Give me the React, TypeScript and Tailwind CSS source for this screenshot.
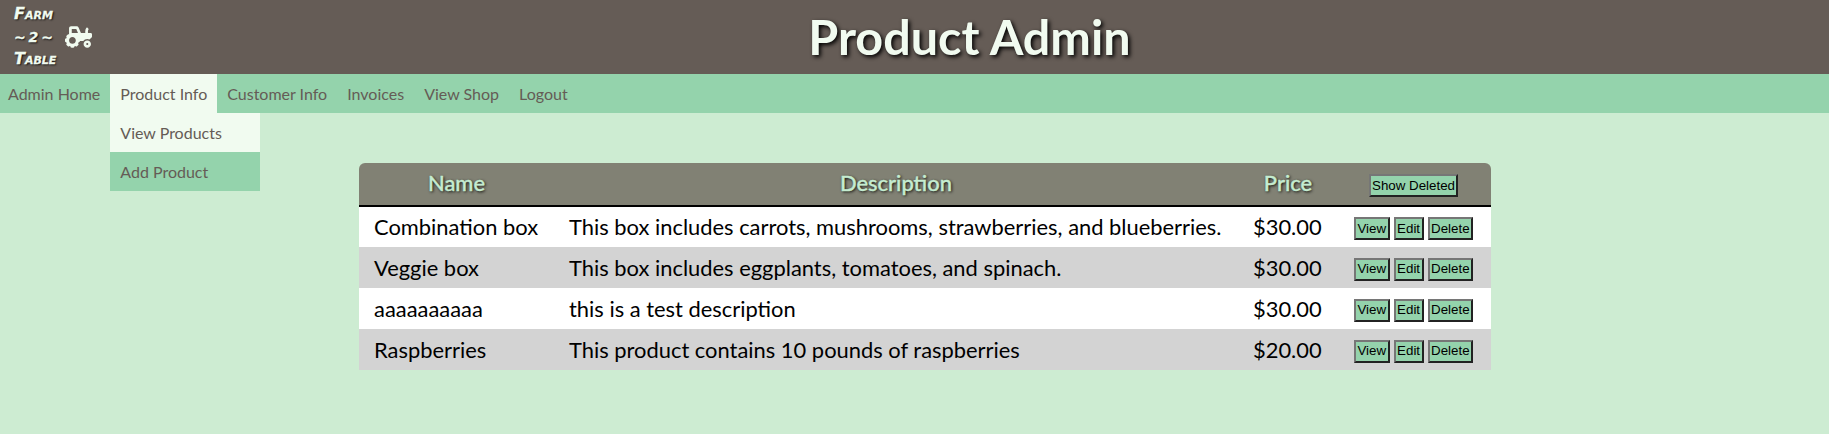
import { FaTractor } from "react-icons/fa";

const products = [
  { name: "Combination box", description: "This box includes carrots, mushrooms, strawberries, and blueberries.", price: "$30.00" },
  { name: "Veggie box", description: "This box includes eggplants, tomatoes, and spinach.", price: "$30.00" },
  { name: "aaaaaaaaaa", description: "this is a test description", price: "$30.00" },
  { name: "Raspberries", description: "This product contains 10 pounds of raspberries", price: "$20.00" },
];

const navItems = ["Admin Home", "Product Info", "Customer Info", "Invoices", "View Shop", "Logout"];

function TableButton({ label }: { label: string }) {
  return (
    <button
      type="button"
      className="h-[23px] border-2 border-t-[#767676] border-l-[#767676] border-r-[#222222] border-b-[#222222] bg-[#94d3ac] px-[1.5px] font-['Liberation_Sans',sans-serif] text-[13.33px] leading-none font-normal text-black"
    >
      {label}
    </button>
  );
}

export default function App() {
  return (
    <div className="min-h-screen bg-[#cdecd2] font-['Lato',sans-serif]">
      <header className="flex h-[74px] items-center bg-[#655c56]">
        <div className="flex w-[110px] items-center pl-[14px]">
          <div className="flex w-[44px] flex-col font-['DejaVu_Sans',sans-serif] text-[16px] leading-[22.5px] font-bold whitespace-nowrap text-[#f1fbf0] italic [font-variant:small-caps] [-webkit-text-stroke:0.3px] [text-shadow:1px_1px_2px_#000]">
            <span>Farm</span>
            <span className="text-[14px] [word-spacing:-2px]">~ 2 ~</span>
            <span>Table</span>
          </div>
          <FaTractor className="ml-[7px] h-[24px] w-[27px] text-[#f1fbf0]" />
        </div>
        <h1 className="flex-1 pb-[1px] text-center text-[48.5px] leading-none font-bold text-[#f1fbf0] [text-shadow:2px_2px_4px_#000]">
          Product Admin
        </h1>
      </header>

      <nav className="flex h-[39px] bg-[#94d3ac] text-base text-[#655c56]">
        {navItems.map((item) =>
          item === "Product Info" ? (
            <div key={item} className="relative">
              <a className="flex h-full items-center bg-[#f1fbf0] px-[10px]">{item}</a>
              <div className="absolute top-[39px] left-0 z-10 w-[150px]">
                <a className="flex h-[39px] items-center bg-[#f1fbf0] px-[10px]">View Products</a>
                <a className="flex h-[39px] items-center bg-[#94d3ac] px-[10px]">Add Product</a>
              </div>
            </div>
          ) : (
            <a key={item} className="flex items-center px-[10px] first:pl-2">
              {item}
            </a>
          ),
        )}
      </nav>

      <main className="pt-[50px] pl-[359px]">
        <table className="w-[1132px] table-fixed border-collapse text-[21.9px] text-black">
          <colgroup>
            <col className="w-[195px]" />
            <col className="w-[684px]" />
            <col className="w-[100px]" />
            <col className="w-[153px]" />
          </colgroup>
          <thead>
            <tr className="h-[43px] border-b-2 border-black text-[#c5ecd0] [text-shadow:1px_1px_3px_#000]">
              <th className="rounded-tl-md bg-[#818174] pb-[2px] font-medium [-webkit-text-stroke:0.4px]">Name</th>
              <th className="bg-[#818174] pb-[2px] font-medium [-webkit-text-stroke:0.4px]">Description</th>
              <th className="bg-[#818174] pb-[2px] font-medium [-webkit-text-stroke:0.4px]">Price</th>
              <th className="rounded-tr-md bg-[#818174] pr-[2px] pb-[3px] [text-shadow:none]">
                <TableButton label="Show Deleted" />
              </th>
            </tr>
          </thead>
          <tbody>
            {products.map((product) => (
              <tr key={product.name} className="h-[41px] bg-white even:bg-[#d3d3d3]">
                <td className="px-[15px] pt-[1px]">{product.name}</td>
                <td className="px-[15px] pt-[1px] whitespace-nowrap">{product.description}</td>
                <td className="px-[15px] pt-[1px]">{product.price}</td>
                <td className="pt-[3px] pr-[2px]">
                  <div className="flex justify-center gap-[4px]">
                    <TableButton label="View" />
                    <TableButton label="Edit" />
                    <TableButton label="Delete" />
                  </div>
                </td>
              </tr>
            ))}
          </tbody>
        </table>
      </main>
    </div>
  );
}
